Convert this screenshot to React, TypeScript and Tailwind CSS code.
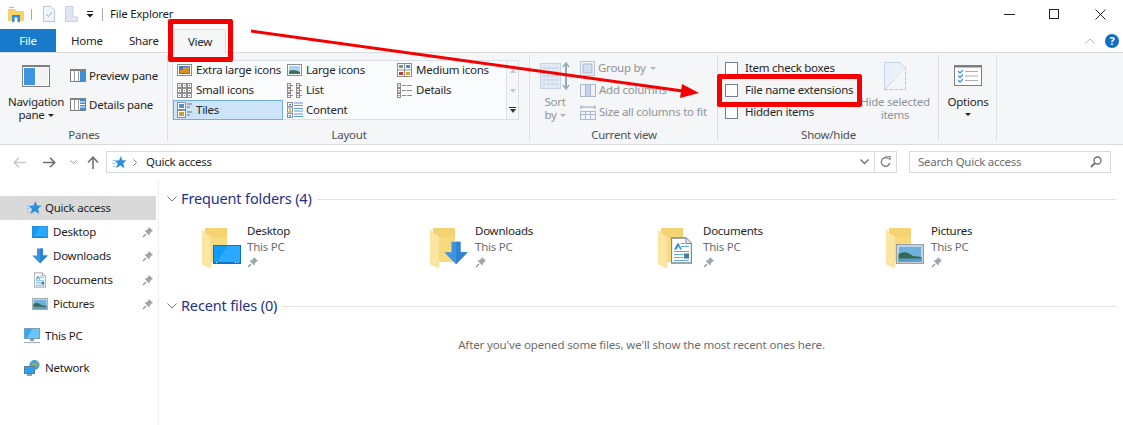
import type { ReactNode } from 'react';

const PinIcon = ({ className = '' }: { className?: string }) => (
  <svg width="12" height="12" viewBox="0 0 12 12" className={className}>
    <path d="M7 1 L11 5 L9.6 5.6 L7.8 7.6 L7.4 9.8 L2.4 4.6 L4.6 4.2 L6.4 2.4 Z" fill="#9aa5ae" />
    <path d="M4 8 L1 11" stroke="#8a949c" strokeWidth="1.2" />
  </svg>
);

const StarIcon = ({ size = 16 }: { size?: number }) => (
  <svg width={size} height={size} viewBox="0 0 16 16">
    <path d="M9.5 1 L11 5.6 L15.5 5.8 L12 8.8 L13.2 14 L9 11.2 L4.4 14 L6 9 L2.6 6 L7.6 5.6 Z" fill="#2b90e0" />
    <path d="M0.5 6 H4 M0 9 H4 M1 12 H4.5" stroke="#8ec6f0" strokeWidth="1" />
  </svg>
);

const DesktopGlyph = ({ w = 16, h = 12 }: { w?: number; h?: number }) => (
  <svg width={w} height={h} viewBox="0 0 28 20" preserveAspectRatio="none" className="block">
    <rect x="0.5" y="0.5" width="27" height="19" fill="#0f9cff" stroke="#0b6fc2" />
    <path d="M14 1 L27 1 L27 18 L4 18 Z" fill="#2aa9ff" />
    <path d="M1 18.5 H27" stroke="#0b6fc2" strokeWidth="1" />
    <path d="M22 18.5 H23 M24.5 18.5 H25.5 M3 18.5 H4" stroke="#fff" strokeWidth="1" />
  </svg>
);

const DownGlyph = ({ size = 16 }: { size?: number }) => (
  <svg width={size} height={size} viewBox="0 0 16 16" className="block">
    <path d="M5 0.5 H11 V7.5 H15.8 L8 15.5 L0.2 7.5 H5 Z" fill="#3a94e2" />
    <path d="M8 0.5 H11 V7.5 H15.8 L8 15.5 Z" fill="#2f84d2" />
  </svg>
);

const DocGlyph = ({ w = 12, h = 16 }: { w?: number; h?: number }) => (
  <svg width={w} height={h} viewBox="0 0 21 26" className="block">
    <path d="M0.5 0.5 H15 L20.5 6 V25.5 H0.5 Z" fill="#fff" stroke="#7f878e" strokeWidth="1.3" />
    <path d="M15 0.5 V6 H20.5" fill="#e6e8ea" stroke="#7f878e" />
    <path d="M7 5 L3 12 H5.5 L7.5 8.5 L9 12 H11 Z" fill="#2b90e0" />
    <path d="M10 6 H14 M10 9 H18 M3 14 H18 M3 17 H12 M3 20 H12 M3 23 H18" stroke="#5ea8e6" strokeWidth="1.2" />
    <rect x="13" y="16" width="5" height="5" fill="#4a7a90" />
  </svg>
);

const PictureGlyph = ({ w = 16, h = 14 }: { w?: number; h?: number }) => (
  <svg width={w} height={h} viewBox="0 0 28 20" preserveAspectRatio="none" className="block">
    <rect x="0.75" y="0.75" width="26.5" height="18.5" fill="#fff" stroke="#9aa1a7" strokeWidth="1.5" />
    <rect x="2.5" y="2.5" width="23" height="15" fill="#6fb0de" />
    <path d="M2.5 10 C8 7 12 8 17 12 L25.5 13 V17.5 H2.5 Z" fill="#356a52" />
    <path d="M2.5 14.5 H25.5 V17.5 H2.5 Z" fill="#5a9ccc" />
  </svg>
);

const PcIcon = () => (
  <svg width="16" height="16" viewBox="0 0 16 16">
    <rect x="0.5" y="0.5" width="15" height="10" fill="#2aa9ff" stroke="#7aa0b8" />
    <path d="M8 1 H15 V10 H3 Z" fill="#6cc4fa" />
    <path d="M6 11 H10 V13 H6 Z" fill="#8a9aa5" />
    <path d="M0 14.5 H16" stroke="#9fb0bb" strokeWidth="1.2" />
  </svg>
);

const NetworkIcon = () => (
  <svg width="16" height="16" viewBox="0 0 16 16">
    <circle cx="10.5" cy="5" r="5" fill="#4d9bdb" />
    <path d="M7 2 C9 4 11 3 13 1.5 L14 6 C12 7 10 6 8 8 Z" fill="#7fb36a" />
    <rect x="0.5" y="6.5" width="10" height="7" fill="#2aa0f0" stroke="#5c7f96" />
    <path d="M3 15 H8" stroke="#6b8291" strokeWidth="1.5" />
  </svg>
);

const FolderBack = () => (
  <svg width="32" height="40" viewBox="0 0 32 40" className="block">
    <path d="M3 0 H25 V34 H3 Z" fill="#f4d372" />
    <path d="M0 2 L9 9 V40 L0 36 Z" fill="#fbe5a2" stroke="#f0d88e" strokeWidth="0.5" />
    <path d="M9 9 H25 V34 H9 Z" fill="#f7d97e" />
  </svg>
);

const Gallery = ({ kind }: { kind: 'xl' | 'large' | 'medium' | 'small' | 'list' | 'details' | 'tiles' | 'content' }) => {
  const red = '#c0392b';
  const blue = '#3d8fdc';
  const grey = '#8d8d8d';
  if (kind === 'xl' || kind === 'large') {
    return (
      <svg width="15" height="12" viewBox="0 0 15 12">
        <rect x="0.5" y="0.5" width="14" height="11" fill="#fff" stroke={grey} />
        <rect x="2" y="2" width="11" height="8" fill={kind === 'xl' ? '#4b77c7' : '#a9d3ef'} />
        {kind === 'xl' ? (
          <path d="M6 3 H12 V9 H6 Z M3 6 H6 V9 H3 Z" fill="#d9902a" />
        ) : (
          <path d="M2 7 C6 5 9 6 13 8 V10 H2 Z" fill="#3f7458" />
        )}
      </svg>
    );
  }
  if (kind === 'medium') {
    return (
      <svg width="15" height="14" viewBox="0 0 15 14">
        <rect x="0.5" y="0.5" width="14" height="13" fill="#fff" stroke={grey} />
        <path d="M7.5 1 V13 M1 7 H14" stroke={grey} />
        <rect x="2" y="2" width="4" height="3" fill="#6b9e7a" />
        <rect x="9" y="2" width="4" height="3" fill={blue} />
        <rect x="2" y="9" width="4" height="3" fill={red} />
        <rect x="9" y="9" width="4" height="3" fill="#d9a52a" />
      </svg>
    );
  }
  if (kind === 'small') {
    return (
      <svg width="15" height="15" viewBox="0 0 15 15">
        {[0, 5, 10].map((x) =>
          [0, 5, 10].map((y) => (
            <g key={`${x}-${y}`}>
              <rect x={x + 0.5} y={y + 0.5} width="4" height="4" fill="#fff" stroke={grey} />
              <rect x={x + 2} y={y + 2} width="1" height="1" fill={x === 10 ? red : x === 5 ? '#7aa04a' : blue} />
            </g>
          )),
        )}
      </svg>
    );
  }
  if (kind === 'list') {
    return (
      <svg width="15" height="15" viewBox="0 0 15 15">
        {[0, 9].map((x) =>
          [0, 5, 10].map((y) => (
            <g key={`${x}-${y}`}>
              <rect x={x + 0.5} y={y + 0.5} width="3" height="4" fill="#fff" stroke={grey} />
              <path d={`M${x + 4} ${y + 2.5} H${x + 6}`} stroke={grey} />
              <rect x={x + 1.5} y={y + 2} width="1" height="1" fill={red} />
            </g>
          )),
        )}
      </svg>
    );
  }
  if (kind === 'details') {
    return (
      <svg width="15" height="15" viewBox="0 0 15 15">
        {[0, 5, 10].map((y) => (
          <g key={y}>
            <rect x="0.5" y={y + 0.5} width="3" height="4" fill="#fff" stroke={grey} />
            <rect x="1.5" y={y + 2} width="1" height="1" fill={red} />
            <path d={`M5 ${y + 2.5} H9 M10 ${y + 2.5} H15`} stroke={grey} />
          </g>
        ))}
      </svg>
    );
  }
  if (kind === 'tiles') {
    return (
      <svg width="16" height="16" viewBox="0 0 16 16">
        <rect x="0.5" y="0.5" width="8" height="7" fill="#fff" stroke={grey} />
        <rect x="2" y="2" width="5" height="4" fill="#5a94c0" />
        <rect x="0.5" y="8.5" width="8" height="7" fill="#fff" stroke={grey} />
        <rect x="2" y="10" width="5" height="4" fill="#c9a13a" />
        <path d="M10 2 H15 M10 5 H13 M10 10 H15 M10 13 H13" stroke="#6d6d6d" />
      </svg>
    );
  }
  return (
    <svg width="16" height="16" viewBox="0 0 16 16">
      {[0, 5.5, 11].map((y, i) => (
        <g key={y}>
          <rect x="0.5" y={y + 0.5} width="5" height="4" fill="#fff" stroke={grey} />
          <rect x="2" y={y + 2} width="2" height="1.5" fill={i === 1 ? '#c9a13a' : blue} />
          <path d={`M7 ${y + 1} H16 M7 ${y + 3.5} H16`} stroke="#5c9bd6" />
        </g>
      ))}
    </svg>
  );
};

const PaneIcon = ({ details }: { details?: boolean }) => (
  <svg width="16" height="13" viewBox="0 0 16 13">
    <rect x="0.5" y="0.5" width="15" height="12" fill="#fff" stroke="#7e7e7e" />
    <path d="M0 1 H16" stroke="#7e7e7e" strokeWidth="2" />
    <path d="M4.5 1 V12 M8.5 1 V12" stroke="#9a9a9a" />
    <rect x="10" y="2" width="5" height="10" fill="#3d8fdc" />
    {details && <path d="M10 4 H15 M10 6.5 H15 M10 9 H15" stroke="#fff" />}
  </svg>
);

const GalleryItem = ({ kind, label, className }: { kind: Parameters<typeof Gallery>[0]['kind']; label: string; className: string }) => (
  <div className={`flex items-center ${className}`}>
    <div className="flex w-[20px] shrink-0 justify-start pl-[1px]">
      <Gallery kind={kind} />
    </div>
    <span className="whitespace-nowrap">{label}</span>
  </div>
);

const RibbonGroup = ({ label, className, children }: { label: string; className: string; children: ReactNode }) => (
  <div className={`relative flex shrink-0 flex-col ${className}`}>
    <div className="flex h-[74px] min-h-0">{children}</div>
    <div className="mt-auto pb-[1px] text-center leading-[16px] text-[#4c5056]">{label}</div>
    <div className="absolute top-0 right-0 bottom-[3px] w-px bg-[#dfe1e4]" />
  </div>
);

const CheckRow = ({ label }: { label: string }) => (
  <div className="flex h-[22px] items-center">
    <span className="h-[13px] w-[13px] border border-[#707f97] bg-white" />
    <span className="ml-[7px] whitespace-nowrap">{label}</span>
  </div>
);

const NavRow = ({ icon, label, pinned }: { icon: ReactNode; label: string; pinned?: boolean }) => (
  <div className="flex h-[24px] items-center pr-[4px]">
    <div className="flex w-[53px] shrink-0 justify-start pl-[32px]">{icon}</div>
    <span className="text-[#1e1e1e]">{label}</span>
    {pinned && <PinIcon className="ml-auto" />}
  </div>
);

const SectionHeader = ({ label }: { label: string }) => (
  <div className="flex h-[22px] items-center">
    <svg width="10" height="6" viewBox="0 0 10 6" className="mr-[4px]">
      <path d="M0.5 0.5 L5 5 L9.5 0.5" fill="none" stroke="#7b7b7b" />
    </svg>
    <span className="text-[14.5px] tracking-[-0.15px] text-[#1e3287]">{label}</span>
    <div className="ml-[5px] h-px flex-1 bg-[#e2e2e2]" />
  </div>
);

const FolderTile = ({ name, overlay, overlayClass }: { name: string; overlay: ReactNode; overlayClass: string }) => (
  <div className="flex w-[228px] shrink-0">
    <div className="relative h-[40px] w-[45px] shrink-0">
      <FolderBack />
      <div className={`absolute ${overlayClass}`}>{overlay}</div>
    </div>
    <div className="-mt-[5px] flex flex-col leading-[16px]">
      <span className="text-[#1e1e1e]">{name}</span>
      <span className="text-[#6d6d6d]">This PC</span>
      <PinIcon className="mt-[1px]" />
    </div>
  </div>
);

export default function App() {
  return (
    <div className="relative h-[425px] w-[1123px] overflow-hidden bg-white font-['Noto_Sans',sans-serif] text-[11.5px] tracking-[-0.25px] text-[#262626]">
      {/* title bar */}
      <div className="flex h-[29px] items-center pb-[1px]">
        <div className="ml-[8px]">
          <svg width="16" height="15" viewBox="0 0 16 15" className="block">
            <path d="M0 2 H7 L8 4 H16 V14 H0 Z" fill="#f7d36a" />
            <path d="M1 0.5 H6" stroke="#e5b84a" />
            <rect x="4" y="8" width="8" height="7" fill="#2b90e0" />
            <rect x="6.5" y="10.5" width="3" height="4.5" fill="#fff" />
          </svg>
        </div>
        <div className="ml-[7px] h-[11px] w-px bg-[#a8a8a8]" />
        <svg width="12" height="16" viewBox="0 0 12 16" className="ml-[11px]">
          <path d="M0.5 0.5 H8 L11.5 4 V15.5 H0.5 Z" fill="#f2f5fa" stroke="#b9c5d8" />
          <path d="M3 8 L5.5 10.5 L9 6" fill="none" stroke="#9fb0c8" />
        </svg>
        <svg width="13" height="16" viewBox="0 0 13 16" className="ml-[10px]">
          <path d="M0.5 0.5 H8 L8 11 H12.5 V15.5 H0.5 Z" fill="#dfe6f3" stroke="#c6d0e2" />
        </svg>
        <svg width="8" height="7" viewBox="0 0 8 7" className="mt-[1px] ml-[8px]">
          <path d="M1 0.5 H7" stroke="#222" />
          <path d="M0.5 3 H7.5 L4 6.5 Z" fill="#222" />
        </svg>
        <div className="ml-[8px] h-[13px] w-px bg-[#a8a8a8]" />
        <span className="ml-[7px] text-[#1e1e1e]">File Explorer</span>
        <div className="ml-auto flex items-center pr-[17px]">
          <div className="h-px w-[11px] bg-[#222]" />
          <div className="ml-[34px] h-[10px] w-[10px] border border-[#222]" />
          <svg width="11" height="11" viewBox="0 0 11 11" className="ml-[36px]">
            <path d="M0.5 0.5 L10.5 10.5 M10.5 0.5 L0.5 10.5" stroke="#222" strokeWidth="1" />
          </svg>
        </div>
      </div>

      {/* tabs */}
      <div className="flex h-[24px] items-stretch border-b border-[#dadbdc]">
        <div className="flex w-[56px] items-center justify-center bg-[#1979ca] text-white">File</div>
        <div className="ml-[15px] flex w-[29px] items-center">Home</div>
        <div className="ml-[29px] flex w-[29px] items-center">Share</div>
        <div className="z-10 ml-[16px] -mb-px flex w-[52px] items-center justify-center border-x border-t border-[#dadbdc] bg-[#f5f6f7]">View</div>
        <div className="ml-auto flex items-center pr-[4px]">
          <svg width="10" height="6" viewBox="0 0 10 6">
            <path d="M0.5 5.5 L5 1 L9.5 5.5" fill="none" stroke="#b5b5b5" />
          </svg>
          <div className="ml-[10px] flex h-[14px] w-[14px] items-center justify-center rounded-full bg-[#0d6fc7] text-[11px] leading-none font-bold text-white">?</div>
        </div>
      </div>

      {/* ribbon */}
      <div className="flex h-[92px] items-stretch border-b border-[#dadbdc] bg-[#f5f6f7] pt-[2px]">
        <RibbonGroup label="Panes" className="w-[168px]">
          <div className="-mr-[2px] flex w-[72px] shrink-0 flex-col items-center pt-[10px]">
            <svg width="28" height="22" viewBox="0 0 28 22">
              <rect x="0.5" y="0.5" width="27" height="21" fill="#fff" stroke="#7e7e7e" />
              <path d="M0 1 H28" stroke="#7e7e7e" strokeWidth="2" />
              <rect x="2" y="3" width="11" height="17" fill="#3d95e2" />
              <path d="M14 2 H26 V20 H14 Z" fill="#f3f3f3" />
            </svg>
            <div className="mt-[8px] text-center leading-[13px] whitespace-nowrap">
              Navigation
              <br />
              pane
              <span className="mb-[2px] ml-[3px] inline-block h-0 w-0 border-x-[3px] border-t-[3px] border-x-transparent border-t-[#222]" />
            </div>
          </div>
          <div className="flex flex-col pt-[6px]">
            <div className="flex h-[29px] items-center">
              <PaneIcon />
              <span className="ml-[3px] whitespace-nowrap">Preview pane</span>
            </div>
            <div className="flex h-[29px] items-center">
              <PaneIcon details />
              <span className="ml-[3px] whitespace-nowrap">Details pane</span>
            </div>
          </div>
        </RibbonGroup>

        <RibbonGroup label="Layout" className="w-[362px]">
          <div className="mt-[5px] ml-[4px] flex h-[60px] w-[347px] border border-[#dcdfe3] bg-[#fafbfd]">
            <div className="-mt-[1px] flex w-[333px] flex-wrap content-start">
              <GalleryItem kind="xl" label="Extra large icons" className="h-[20px] w-[110px] pl-[3px]" />
              <GalleryItem kind="large" label="Large icons" className="h-[20px] w-[110px] pl-[3px]" />
              <GalleryItem kind="medium" label="Medium icons" className="h-[20px] w-[110px] pl-[3px]" />
              <GalleryItem kind="small" label="Small icons" className="h-[20px] w-[110px] pl-[3px]" />
              <GalleryItem kind="list" label="List" className="h-[20px] w-[110px] pl-[3px]" />
              <GalleryItem kind="details" label="Details" className="h-[20px] w-[110px] pl-[3px]" />
              <GalleryItem kind="tiles" label="Tiles" className="h-[20px] w-[110px] border border-[#6eaee5] bg-[#cde4f8] pl-[2px]" />
              <GalleryItem kind="content" label="Content" className="h-[20px] w-[110px] pl-[3px]" />
            </div>
            <div className="flex flex-1 flex-col items-center border-l border-[#dcdfe3] bg-[#f5f6f7]">
              <div className="flex h-[20px] items-center">
                <span className="h-0 w-0 border-x-[3.5px] border-b-[4px] border-x-transparent border-b-[#c5c9ce]" />
              </div>
              <div className="flex h-[20px] items-center">
                <span className="h-0 w-0 border-x-[3.5px] border-t-[4px] border-x-transparent border-t-[#c5c9ce]" />
              </div>
              <div className="flex h-[18px] flex-col items-center justify-center">
                <span className="mb-[1px] h-px w-[7px] bg-[#333]" />
                <span className="h-0 w-0 border-x-[3.5px] border-t-[4px] border-x-transparent border-t-[#333]" />
              </div>
            </div>
          </div>
        </RibbonGroup>

        <RibbonGroup label="Current view" className="w-[188px] text-[#8f9499]">
          <div className="flex w-[50px] shrink-0 flex-col items-center pt-[7px]">
            <svg width="30" height="28" viewBox="0 0 30 28">
              <rect x="0.5" y="1.5" width="20" height="25" fill="#e1e9f5" stroke="#c6d3e6" />
              <path d="M3 6 H18 M3 10 H18 M3 14 H18 M3 18 H18 M3 22 H18" stroke="#b9c8de" strokeDasharray="3 1" />
              <path d="M26 2 V26" stroke="#98a9bf" strokeWidth="2" />
              <path d="M23 5 L26 1 L29 5 M23 23 L26 27 L29 23" fill="none" stroke="#98a9bf" strokeWidth="1.5" />
            </svg>
            <div className="mt-[5px] text-center leading-[13px]">
              Sort
              <br />
              by
              <span className="mb-[2px] ml-[3px] inline-block h-0 w-0 border-x-[3px] border-t-[3px] border-x-transparent border-t-[#b0b4b8]" />
            </div>
          </div>
          <div className="flex flex-col pt-[2px]">
            <div className="flex h-[22px] items-center">
              <svg width="15" height="15" viewBox="0 0 15 15">
                <rect x="0.5" y="0.5" width="14" height="14" fill="#f2f5fa" stroke="#b7c4d6" />
                <rect x="3" y="3" width="9" height="9" fill="#d3deee" stroke="#a9b9cf" />
              </svg>
              <span className="ml-[3px] whitespace-nowrap">Group by</span>
              <span className="ml-[4px] h-0 w-0 border-x-[3px] border-t-[3px] border-x-transparent border-t-[#b0b4b8]" />
            </div>
            <div className="flex h-[22px] items-center">
              <svg width="16" height="14" viewBox="0 0 16 14">
                <rect x="0.5" y="1.5" width="15" height="12" fill="#eef2f8" stroke="#a9b9cf" />
                <path d="M5.5 2 V13 M10.5 2 V13" stroke="#a9b9cf" />
                <rect x="6" y="2" width="4" height="11" fill="#c5d3e6" />
              </svg>
              <span className="ml-[3px] whitespace-nowrap">Add columns</span>
            </div>
            <div className="flex h-[22px] items-center">
              <svg width="16" height="15" viewBox="0 0 16 15">
                <path d="M1 2 H15 M1 0.5 V4 M15 0.5 V4" stroke="#8ea0b6" />
                <rect x="0.5" y="6.5" width="15" height="8" fill="#f2f5fa" stroke="#a9b9cf" />
                <path d="M5.5 7 V14 M10.5 7 V14 M1 9.5 H15" stroke="#a9b9cf" />
              </svg>
              <span className="ml-[3px] whitespace-nowrap">Size all columns to fit</span>
            </div>
          </div>
        </RibbonGroup>

        <RibbonGroup label="Show/hide" className="w-[221px]">
          <div className="flex w-[141px] shrink-0 flex-col pt-[2px] pl-[7px]">
            <CheckRow label="Item check boxes" />
            <CheckRow label="File name extensions" />
            <CheckRow label="Hidden items" />
          </div>
          <div className="flex flex-1 flex-col items-center pt-[7px] pr-[8px] text-[#8f9499]">
            <svg width="22" height="28" viewBox="0 0 22 28">
              <path d="M0.5 0.5 H16 L21.5 6 V27.5 H0.5 Z" fill="#eaf0fa" stroke="#c6d3e6" />
              <path d="M1 27 L21 7" stroke="#b8c7dc" />
              <path d="M1 27.5 H21.5 V6" fill="#f5f6f7" stroke="#b8c7dc" strokeDasharray="3 2" />
            </svg>
            <div className="mt-[5px] text-center leading-[13px] whitespace-nowrap">
              Hide selected
              <br />
              items
            </div>
          </div>
        </RibbonGroup>

        <RibbonGroup label="" className="w-[58px]">
          <div className="flex w-full flex-col items-center pt-[10px]">
            <svg width="28" height="21" viewBox="0 0 28 21">
              <rect x="0.5" y="0.5" width="27" height="20" fill="#fff" stroke="#7e7e7e" />
              <path d="M0 1.5 H28" stroke="#7e7e7e" strokeWidth="2" />
              <path d="M11 6.5 H24 M11 11 H24 M11 15.5 H24" stroke="#b0b0b0" />
              <path d="M4 6 L6 8 L9 5 M4 10.5 L6 12.5 L9 9.5 M4 15 L6 17 L9 14" fill="none" stroke="#3d95e2" strokeWidth="1.3" />
            </svg>
            <div className="mt-[9px] leading-[13px]">Options</div>
            <span className="mt-[5px] h-0 w-0 border-x-[3px] border-t-[3px] border-x-transparent border-t-[#222]" />
          </div>
        </RibbonGroup>
      </div>

      {/* address row */}
      <div className="mt-[6px] mb-[8px] flex h-[22px] items-center">
        <svg width="13" height="11" viewBox="0 0 13 11" className="ml-[13px]">
          <path d="M13 5.5 H1.5 M6 0.8 L1.2 5.5 L6 10.2" fill="none" stroke="#c9c9c9" strokeWidth="1.5" />
        </svg>
        <svg width="13" height="11" viewBox="0 0 13 11" className="ml-[17px]">
          <path d="M0 5.5 H11.5 M7 0.8 L11.8 5.5 L7 10.2" fill="none" stroke="#6d6d6d" strokeWidth="1.5" />
        </svg>
        <svg width="7" height="5" viewBox="0 0 7 5" className="ml-[14px]">
          <path d="M0.5 0.5 L3.5 3.5 L6.5 0.5" fill="none" stroke="#8f8f8f" />
        </svg>
        <svg width="12" height="13" viewBox="0 0 12 13" className="ml-[10px]">
          <path d="M6 13 V1.5 M1 6.5 L6 1.2 L11 6.5" fill="none" stroke="#6d6d6d" strokeWidth="1.5" />
        </svg>
        <div className="ml-[7px] flex h-[22px] w-[791px] items-center border border-[#d9d9d9] pl-[5px]">
          <StarIcon size={15} />
          <svg width="4" height="7" viewBox="0 0 4 7" className="ml-[6px]">
            <path d="M0.5 0.5 L3.5 3.5 L0.5 6.5" fill="none" stroke="#7a7a7a" />
          </svg>
          <span className="ml-[9px]">Quick access</span>
          <div className="ml-auto flex h-full items-center">
            <svg width="9" height="6" viewBox="0 0 9 6">
              <path d="M0.5 0.5 L4.5 4.5 L8.5 0.5" fill="none" stroke="#6d6d6d" strokeWidth="1.4" />
            </svg>
            <div className="ml-[5px] h-full w-px bg-[#d9d9d9]" />
            <svg width="11" height="12" viewBox="0 0 11 12" className="mx-[5px]">
              <path d="M8.8 3 A4.3 4.3 0 1 0 9.8 7" fill="none" stroke="#7a7a7a" strokeWidth="1.3" />
              <path d="M5.5 0 H10 V4" fill="none" stroke="#7a7a7a" strokeWidth="1.3" />
            </svg>
          </div>
        </div>
        <div className="ml-[12px] flex h-[22px] w-[202px] items-center border border-[#d9d9d9] px-[8px] text-[#6d6d6d]">
          <span>Search Quick access</span>
          <svg width="12" height="12" viewBox="0 0 12 12" className="ml-auto">
            <circle cx="7.5" cy="4.5" r="3.5" fill="none" stroke="#6d6d6d" strokeWidth="1.3" />
            <path d="M4.8 7.2 L1 11" stroke="#6d6d6d" strokeWidth="1.8" />
          </svg>
        </div>
      </div>

      {/* body */}
      <div className="flex h-[244px]">
        <div className="w-[159px] shrink-0 border-r border-[#efefef] pt-[15px]">
          <div className="flex h-[24px] w-[156px] items-center bg-[#d9d9d9] pl-[26px]">
            <StarIcon />
            <span className="ml-[3px] text-[#1e1e1e]">Quick access</span>
          </div>
          <NavRow icon={<DesktopGlyph />} label="Desktop" pinned />
          <NavRow icon={<DownGlyph />} label="Downloads" pinned />
          <NavRow icon={<div className="pl-[2px]"><DocGlyph /></div>} label="Documents" pinned />
          <NavRow icon={<PictureGlyph h={12} />} label="Pictures" pinned />
          <div className="mt-[8px] flex h-[24px] items-center pl-[24px]">
            <PcIcon />
            <span className="ml-[5px] text-[#1e1e1e]">This PC</span>
          </div>
          <div className="mt-[8px] flex h-[24px] items-center pl-[24px]">
            <NetworkIcon />
            <span className="ml-[5px] text-[#1e1e1e]">Network</span>
          </div>
        </div>
        <div className="min-w-0 flex-1 pt-[7px] pr-[7px] pl-[8px]">
          <SectionHeader label="Frequent folders (4)" />
          <div className="mt-[18px] flex pl-[35px]">
            <FolderTile name="Desktop" overlayClass="top-[17px] left-[11px]" overlay={<DesktopGlyph w={28} h={19} />} />
            <FolderTile name="Downloads" overlayClass="top-[13px] left-[14px]" overlay={<DownGlyph size={24} />} />
            <FolderTile name="Documents" overlayClass="top-[9px] left-[13px]" overlay={<DocGlyph w={21} h={27} />} />
            <FolderTile name="Pictures" overlayClass="top-[16px] left-[10px]" overlay={<PictureGlyph w={28} h={20} />} />
          </div>
          <div className="mt-[27px]">
            <SectionHeader label="Recent files (0)" />
          </div>
          <div className="mt-[19px] w-[949px] text-center tracking-[-0.13px] text-[#6d6d6d]">After you've opened some files, we'll show the most recent ones here.</div>
        </div>
      </div>

      {/* red annotations */}
      <div className="absolute top-[19px] left-[168px] h-[43px] w-[65px] rounded-[2px] border-[5px] border-[#f50000]" />
      <div className="absolute top-[74px] left-[717px] h-[33px] w-[145px] rounded-[2px] border-[5px] border-[#f50000]" />
      <svg width="1123" height="425" viewBox="0 0 1123 425" className="pointer-events-none absolute top-0 left-0">
        <path d="M251 31 L690 92" stroke="#f50000" strokeWidth="3" />
        <path d="M699 93 L682 84 L680 98 Z" fill="#f50000" />
      </svg>
    </div>
  );
}
